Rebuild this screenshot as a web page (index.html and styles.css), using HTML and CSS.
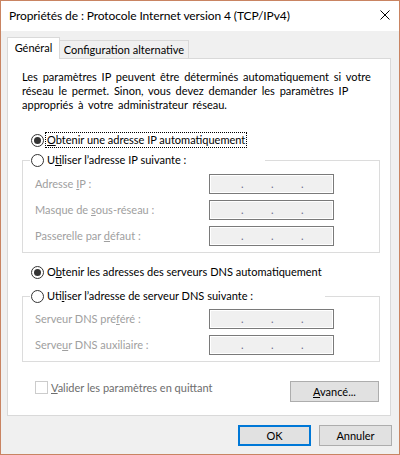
FILE: index.html
```html
<!DOCTYPE html>
<html lang="fr">
<head>
<meta charset="utf-8">
<title>Propriétés de : Protocole Internet version 4 (TCP/IPv4)</title>
<link rel="stylesheet" href="styles.css">
</head>
<body>
<div class="window">
  <div class="titlebar">
    <span class="title">Propriétés de : Protocole Internet version 4 (TCP/IPv4)</span>
    <svg class="close" width="10" height="10" viewBox="0 0 10 10"><path d="M0.5 0.5L9.5 9.5M9.5 0.5L0.5 9.5" stroke="#000" stroke-width="1" fill="none"/></svg>
  </div>
  <div class="body">
    <div class="tabs">
      <div class="tab active">Général</div>
      <div class="tab">Configuration alternative</div>
    </div>
    <div class="panel">
      <p class="intro">Les paramètres IP peuvent être déterminés automatiquement si votre<br>réseau le permet. Sinon, vous devez demander les paramètres IP<br>appropriés à votre administrateur réseau.</p>

      <div class="radio-row first">
        <span class="radio checked"></span>
        <span class="focus"><u>O</u>btenir une adresse IP automatiquement</span>
      </div>

      <fieldset class="group g1">
        <legend class="legend ip">
          <span class="radio"></span>
          <span class="rlabel">U<u>t</u>iliser l’adresse IP suivante :</span>
        </legend>
        <div class="fields">
          <span class="flabel">Adresse <u>I</u>P :</span>
          <span class="ipbox"><i>.</i><i>.</i><i>.</i></span>
          <span class="flabel">Masque de <u>s</u>ous-réseau :</span>
          <span class="ipbox"><i>.</i><i>.</i><i>.</i></span>
          <span class="flabel">Passerelle par <u>d</u>éfaut :</span>
          <span class="ipbox"><i>.</i><i>.</i><i>.</i></span>
        </div>
      </fieldset>

      <div class="radio-row dns">
        <span class="radio checked"></span>
        <span class="rlabel">O<u>b</u>tenir les adresses des serveurs DNS automatiquement</span>
      </div>

      <fieldset class="group g2">
        <legend class="legend dnsl">
          <span class="radio"></span>
          <span class="rlabel">Uti<u>l</u>iser l’adresse de serveur DNS suivante :</span>
        </legend>
        <div class="fields">
          <span class="flabel">Serveur DNS pré<u>f</u>éré :</span>
          <span class="ipbox"><i>.</i><i>.</i><i>.</i></span>
          <span class="flabel">Serve<u>u</u>r DNS auxiliaire :</span>
          <span class="ipbox"><i>.</i><i>.</i><i>.</i></span>
        </div>
      </fieldset>

      <div class="bottom-row">
        <label class="check">
          <span class="checkbox"></span>
          <span class="clabel"><u>V</u>alider les paramètres en quittant</span>
        </label>
        <button class="btn adv"><u>A</u>vancé...</button>
      </div>
    </div>
    <div class="buttons">
      <button class="btn default">OK</button>
      <button class="btn">Annuler</button>
    </div>
  </div>
</div>
</body>
</html>
```

FILE: styles.css
```css
* { box-sizing: border-box; }
html, body { margin: 0; padding: 0; }
body {
  width: 400px;
  height: 455px;
  background: #f0f0f0;
  font-family: Lato, "Noto Sans", sans-serif;
  font-size: 11px;
  color: #000;
}
u { text-decoration: underline; text-underline-offset: 1px; }

.window {
  width: 400px;
  height: 455px;
  border: 1px solid #c98462;
  background: #f0f0f0;
  display: flex;
  flex-direction: column;
}

.titlebar {
  height: 30px;
  flex: none;
  background: #fff;
  display: flex;
  align-items: center;
  justify-content: space-between;
  padding: 0 9px 0 8px;
}
.title { font-size: 12px; line-height: 30px; white-space: nowrap; letter-spacing: -0.1px; }
.close { display: block; margin-bottom: 2px; }

.body {
  flex: 1;
  padding: 6px 8px 0 6px;
  display: flex;
  flex-direction: column;
}

.tabs { display: flex; align-items: flex-end; height: 21px; flex: none; }
.tab {
  height: 18px;
  line-height: 17px;
  width: 130px;
  margin-left: -1px;
  border: 1px solid #d9d9d9;
  border-bottom: none;
  background: #f0f0f0;
  text-align: center;
  white-space: nowrap;
}
.tab.active {
  height: 22px;
  line-height: 20px;
  width: 53px;
  margin-left: 0;
  margin-bottom: -1px;
  background: #fff;
  position: relative;
  z-index: 1;
}

.panel {
  height: 358px;
  flex: none;
  background: #fff;
  border: 1px solid #d9d9d9;
  padding: 11px 0 0 0;
  display: flex;
  flex-direction: column;
}

.intro {
  margin: 0 0 0 14px;
  line-height: 14px;
  white-space: nowrap;
  word-spacing: 2px;
}

.radio-row {
  display: flex;
  align-items: center;
  height: 16px;
  margin-left: 23px;
}
.radio-row.first { margin-top: 20px; }
.radio-row.dns { margin-top: 11px; }

.radio {
  width: 13px;
  height: 13px;
  flex: none;
  border: 1px solid #333;
  border-radius: 50%;
  background: #fff;
  display: flex;
  align-items: center;
  justify-content: center;
  margin-right: 1px;
}
.radio.checked::after {
  content: "";
  width: 7px;
  height: 7px;
  border-radius: 50%;
  background: #333;
}

.focus {
  border: 1px dotted #000;
  padding: 0 1px;
  line-height: 14px;
  white-space: nowrap;
}
.rlabel { padding-left: 2px; white-space: nowrap; line-height: 14px; }

.group {
  margin: 0 10px 0 14px;
  padding: 6px 0 6px 0;
  border: 1px solid #dcdcdc;
  min-width: 0;
}
.g1 { margin-top: 4px; }
.g2 { margin-top: 8px; padding-top: 5px; }

.legend {
  display: flex;
  align-items: center;
  height: 16px;
  margin-left: 7px;
  padding: 0 0 0 1px;
  background: #fff;
}
.legend.ip { width: 235px; }
.legend.dnsl { width: 295px; }

.fields {
  display: grid;
  grid-template-columns: 174px 125px;
  row-gap: 6px;
  align-items: center;
  margin-left: 12px;
}
.flabel { color: #a0a0a0; white-space: nowrap; line-height: 14px; }

.ipbox {
  height: 20px;
  border: 1px solid #7a7a7a;
  box-shadow: inset 0 0 0 1px #fff;
  background: #f0f0f0;
  display: flex;
  padding-left: 31px;
  gap: 27px;
  color: #6d6d8d;
  line-height: 18px;
}
.ipbox i { font-style: normal; width: 3px; }

.bottom-row {
  display: flex;
  justify-content: space-between;
  align-items: flex-start;
  margin-top: 19px;
  padding-right: 11px;
}
.check {
  display: flex;
  align-items: center;
  height: 13px;
  margin-left: 27px;
  color: #6d6d6d;
}
.checkbox {
  width: 13px;
  height: 13px;
  border: 1px solid #cccccc;
  background: #fff;
  margin-right: 3px;
  flex: none;
}
.clabel { white-space: nowrap; line-height: 13px; }

.btn {
  font-family: inherit;
  font-size: 11px;
  color: #000;
  background: #e1e1e1;
  border: 1px solid #adadad;
  border-radius: 0;
  padding: 0;
  margin: 0;
  height: 21px;
  width: 73px;
  line-height: 19px;
  text-align: center;
}
.btn.adv { width: 89px; }
.btn.default { border: 2px solid #0078d7; line-height: 17px; }

.buttons {
  display: flex;
  justify-content: flex-end;
  gap: 8px;
  margin-top: 9px;
  margin-right: -1px;
}
```
